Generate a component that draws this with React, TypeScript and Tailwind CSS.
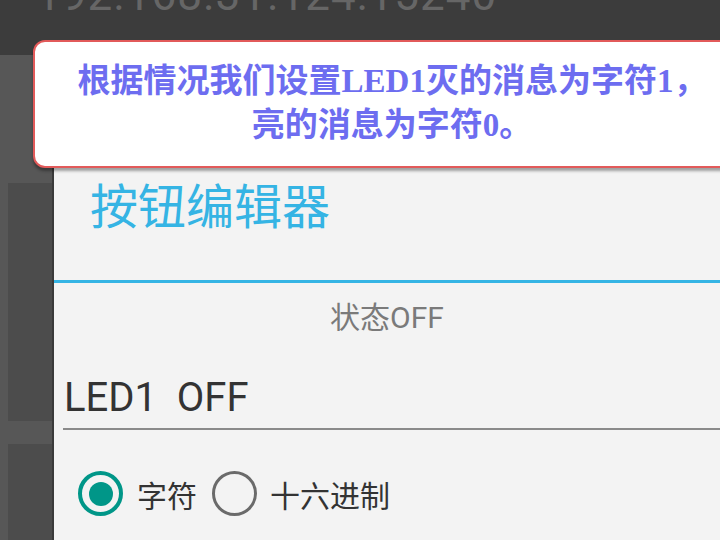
import React from "react";

const cjk = '"Noto Sans CJK SC", sans-serif';

function Radio({ checked }: { checked: boolean }) {
  if (checked) {
    return (
      <span className="flex h-[45px] w-[45px] shrink-0 items-center justify-center rounded-full border-[4px] border-[#009688]">
        <span className="h-[24px] w-[24px] rounded-full bg-[#009688]" />
      </span>
    );
  }
  return <span className="block h-[45px] w-[45px] shrink-0 rounded-full border-[3px] border-[#6a6a6a]" />;
}

export default function App() {
  return (
    <div
      className="relative flex h-[540px] w-[720px] flex-col overflow-hidden bg-[#575757]"
      style={{ fontFamily: '"Roboto", "Noto Sans CJK SC", sans-serif' }}
    >
      {/* status / title bar, mostly scrolled off */}
      <div className="h-[55px] shrink-0 overflow-hidden bg-[#3c3c3c] pl-[36px]">
        <div className="-mt-[27px] text-[44px] leading-none tracking-[1px] text-[#666666]">
          192.168.31.124:15240
        </div>
      </div>

      <div className="flex flex-1">
        {/* list behind the dialog */}
        <div className="flex w-[52px] shrink-0 flex-col pt-[128px]">
          <div className="ml-[8px] h-[238px] bg-[#4c4c4c]" />
          <div className="h-[23px]" />
          <div className="ml-[8px] flex-1 bg-[#4c4c4c]" />
        </div>

        {/* dialog */}
        <div className="flex flex-1 flex-col border-l-2 border-[#3a3a3a] bg-[#f3f3f3] pt-[113px]">
          <div className="flex h-[112px] items-center pb-[42px] pl-[36px]">
            <h1 className="text-[48px] leading-none text-[#35b4e4]" style={{ fontFamily: cjk }}>
              按钮编辑器
            </h1>
          </div>
          <div className="h-[3px] bg-[#35b4e4]" />
          <div className="pt-[17px] text-center text-[30px] leading-[36px] text-[#7a7a7a]">
            状态OFF
          </div>
          <div className="ml-[9px] mt-[38px] border-b-2 border-[#8a8a8a] pb-[6px]">
            <div className="whitespace-pre pl-[1px] text-[40px] leading-[48px] text-[#333333]">
              LED1  OFF
            </div>
          </div>
          <div className="mt-[41px] flex items-center pl-[24px] text-[30px] leading-none text-[#333333]" style={{ fontFamily: cjk }}>
            <Radio checked />
            <span className="ml-[14px]">字符</span>
            <span className="ml-[15px] flex">
              <Radio checked={false} />
            </span>
            <span className="ml-[13px]">十六进制</span>
          </div>
        </div>
      </div>

      {/* annotation callout */}
      <div className="absolute left-[33px] top-[40px] flex h-[128px] w-[704px] flex-col items-center justify-center rounded-l-[12px] border-2 border-[#e25a5a] bg-white pb-[2px] pl-[14px] shadow-[0_3px_3px_rgba(0,0,0,0.35)]">
        <p
          className="text-center text-[33px] font-bold leading-[44px] text-[#6d6df0]"
          style={{ fontFamily: '"Liberation Serif", "Noto Sans CJK SC", serif' }}
        >
          根据情况我们设置LED1灭的消息为字符1，
          <br />
          亮的消息为字符0。
        </p>
      </div>
    </div>
  );
}
